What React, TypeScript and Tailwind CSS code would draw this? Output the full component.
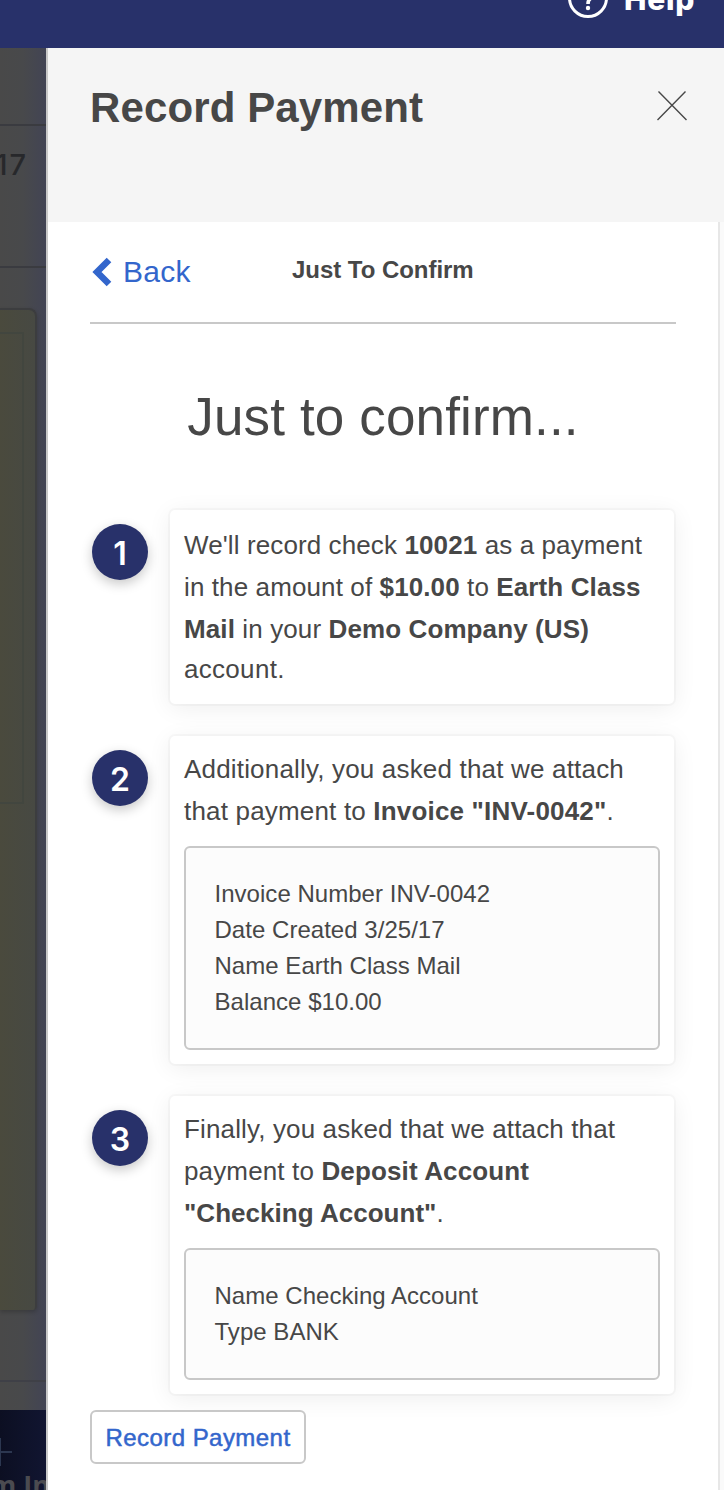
import React from 'react';

type Detail = { label: string; value: string };

const invoiceDetails: Detail[] = [
  { label: 'Invoice Number', value: 'INV-0042' },
  { label: 'Date Created', value: '3/25/17' },
  { label: 'Name', value: 'Earth Class Mail' },
  { label: 'Balance', value: '$10.00' },
];

const accountDetails: Detail[] = [
  { label: 'Name', value: 'Checking Account' },
  { label: 'Type', value: 'BANK' },
];

const DetailBox = ({ details }: { details: Detail[] }) => (
  <div className="rounded-md border-2 border-[#c8c8c8] bg-[#fcfcfc] px-[28.500px] py-7">
    {details.map((d) => (
      <p key={d.label} className="h-9 text-[24px] leading-[36px] tracking-[0.03px] whitespace-nowrap">
        {d.label} {d.value}
      </p>
    ))}
  </div>
);

const Step = ({ num, className, children }: { num: number; className: string; children: React.ReactNode }) => (
  <div className="flex items-start gap-[22px]">
    <div className="mt-3.5 flex h-14 w-14 shrink-0 justify-center rounded-full bg-[#28316a] pt-[11px] font-[Inter,sans-serif] text-[32px] leading-[38px] font-semibold text-white shadow-[0_4px_12px_rgba(0,0,0,0.22)]">
      {num}
    </div>
    <div className={`w-[504px] rounded-[5px] bg-white pr-3.5 pl-3.5 shadow-[0_0_0_2px_rgba(0,0,0,0.025),0_4px_24px_rgba(0,0,0,0.07)] ${className}`}>
      {children}
    </div>
  </div>
);

// Page sitting behind the drawer
const Backdrop = () => (
  <div className="flex w-[46px] shrink-0 flex-col overflow-hidden bg-linear-to-r from-[#494949] via-[#48494b] to-[#424454]">
    <div className="h-[78px] shrink-0 border-b-2 border-[#3a3b40]" />
    <div className="flex h-[142px] shrink-0 justify-end border-b-2 border-[#3a3b40] pt-[22px] pr-[18px] font-[Inter,sans-serif] text-[29px] leading-[34px] font-medium tracking-[2px] text-[#27282b]">
      17
    </div>
    <div className="mt-10 h-[1002px] w-[37px] shrink-0 rounded-tr-lg rounded-br-sm border-t-2 border-r-2 border-[#3c3d3f] bg-linear-to-r from-[#4a4a3d] to-[#474943] pt-[22px] shadow-[0_2px_4px_rgba(0,0,0,0.2)]">
      <div className="h-[472px] w-6 border-t-2 border-r-2 border-b-2 border-[#42463f]" />
    </div>
    <div className="h-[72px] shrink-0 border-b-2 border-[#3f4047]" />
    <div className="mt-7 flex h-20 shrink-0 flex-col bg-linear-to-r from-[#0c0f22] to-[#111531] pt-[26px]">
      <svg className="h-8 w-3 shrink-0" viewBox="0 0 12 32" fill="none" stroke="#2c3750" strokeWidth="2">
        <path d="M0 16h12M0 2v28" />
      </svg>
      <span className="-mt-px flex w-[50px] justify-end font-['Open_Sans'] text-[27px] leading-[36px] font-bold whitespace-nowrap text-[#4b4b50]">
        m In
      </span>
    </div>
  </div>
);

export default function App() {
  return (
    <div className="flex h-[1490px] w-[724px] flex-col overflow-hidden bg-white font-['Liberation_Sans',Arial,sans-serif] text-[#474747]">
      <header className="flex h-12 shrink-0 justify-end gap-4 overflow-hidden bg-[#28316a] pr-[29px] text-white">
        <svg className="-mt-[22px] h-10 w-10" viewBox="0 0 40 40" fill="none" stroke="currentColor" strokeWidth="3">
          <circle cx="20" cy="20" r="18.5" />
          <path d="M14 15a6 6 0 1 1 8.5 5.5Q20 22 20 26" strokeWidth="3.6" />
          <circle cx="20" cy="30" r="2.2" fill="currentColor" stroke="none" />
        </svg>
        <span className="-mt-5 font-[Inter,sans-serif] text-[30px] leading-[38px] font-extrabold tracking-[0.7px]">Help</span>
      </header>

      <div className="flex min-h-0 flex-1">
        <Backdrop />

        <main className="flex min-w-0 flex-1 flex-col border-l-2 border-[#c8c8c8]">
          <div className="flex h-[174px] shrink-0 items-start justify-between bg-[#f5f5f5] pt-[37px] pr-9 pl-[42px]">
            <h1 className="text-[42px] leading-[46px] font-bold tracking-[0.12px]">Record Payment</h1>
            <button aria-label="Close" className="mt-[5px]">
              <svg className="h-8 w-8" viewBox="0 0 32 32" fill="none" stroke="#474747" strokeWidth="1.4">
                <path d="M2.5 1.500l28 28.5M29.500 1.500L1.500 30" />
              </svg>
            </button>
          </div>

          <div className="flex min-h-0 flex-1">
            <section className="flex w-[670px] shrink-0 flex-col pl-[42px]">
              <div className="flex h-[102px] w-[586px] shrink-0 items-start border-b-2 border-[#c8c8c8] pt-[34px]">
                <button className="flex w-[202px] items-center text-[30px] leading-[32px] tracking-[0.3px] text-[#3366cc]">
                  <svg className="mr-[11px] ml-0.5 h-[30px] w-5" viewBox="0 0 20 30" fill="none" stroke="currentColor" strokeWidth="6.500">
                    <path d="M17 3L5 15l12 12" />
                  </svg>
                  Back
                </button>
                <h2 className="text-[24px] leading-[28px] font-bold tracking-[-0.04px] whitespace-nowrap">Just To Confirm</h2>
              </div>

              <h3 className="mt-[63px] w-[586px] text-center text-[53px] leading-[60px] tracking-[0.15px]">Just to confirm...</h3>

              <div className="mt-[63px] ml-0.5 flex flex-col gap-8">
                <Step num={1} className="h-[194px] pt-3.5">
                  <p className="text-[26px] leading-[42px] tracking-[0.11px] whitespace-nowrap">
                    We'll record check <b>10021</b> as a payment
                    <br />
                    in the amount of <b>$10.00</b> to <b>Earth Class</b>
                    <br />
                    <b>Mail</b> in your <b>Demo Company (US)</b>
                  </p>
                  <p className="text-[26px] leading-[38px] tracking-[0.3px]">account.</p>
                </Step>

                <Step num={2} className="h-[328px] pt-3">
                  <p className="mb-3.5 text-[26px] leading-[42px] tracking-[0.18px] whitespace-nowrap">
                    Additionally, you asked that we attach
                    <br />
                    that payment to <b>Invoice "INV-0042"</b>.
                  </p>
                  <DetailBox details={invoiceDetails} />
                </Step>

                <Step num={3} className="h-[298px] pt-3">
                  <p className="mb-3.5 text-[26px] leading-[42px] tracking-[0.14px] whitespace-nowrap">
                    Finally, you asked that we attach that
                    <br />
                    payment to <b>Deposit Account</b>
                    <br />
                    <b className="tracking-[0.03px]">"Checking Account"</b>.
                  </p>
                  <DetailBox details={accountDetails} />
                </Step>
              </div>

              <button className="mt-4 h-[54px] w-[216px] rounded-md border-2 border-[#c8c8c8] bg-white pt-0.5 text-[24px] tracking-[0.45px] text-[#3366cc] [-webkit-text-stroke:0.5px_#3366cc]">
                Record Payment
              </button>
            </section>
            {/* scroll track */}
            <div className="flex-1 border-l-2 border-[#e7e7e7] bg-[#fafafa]" />
          </div>
        </main>
      </div>
    </div>
  );
}
